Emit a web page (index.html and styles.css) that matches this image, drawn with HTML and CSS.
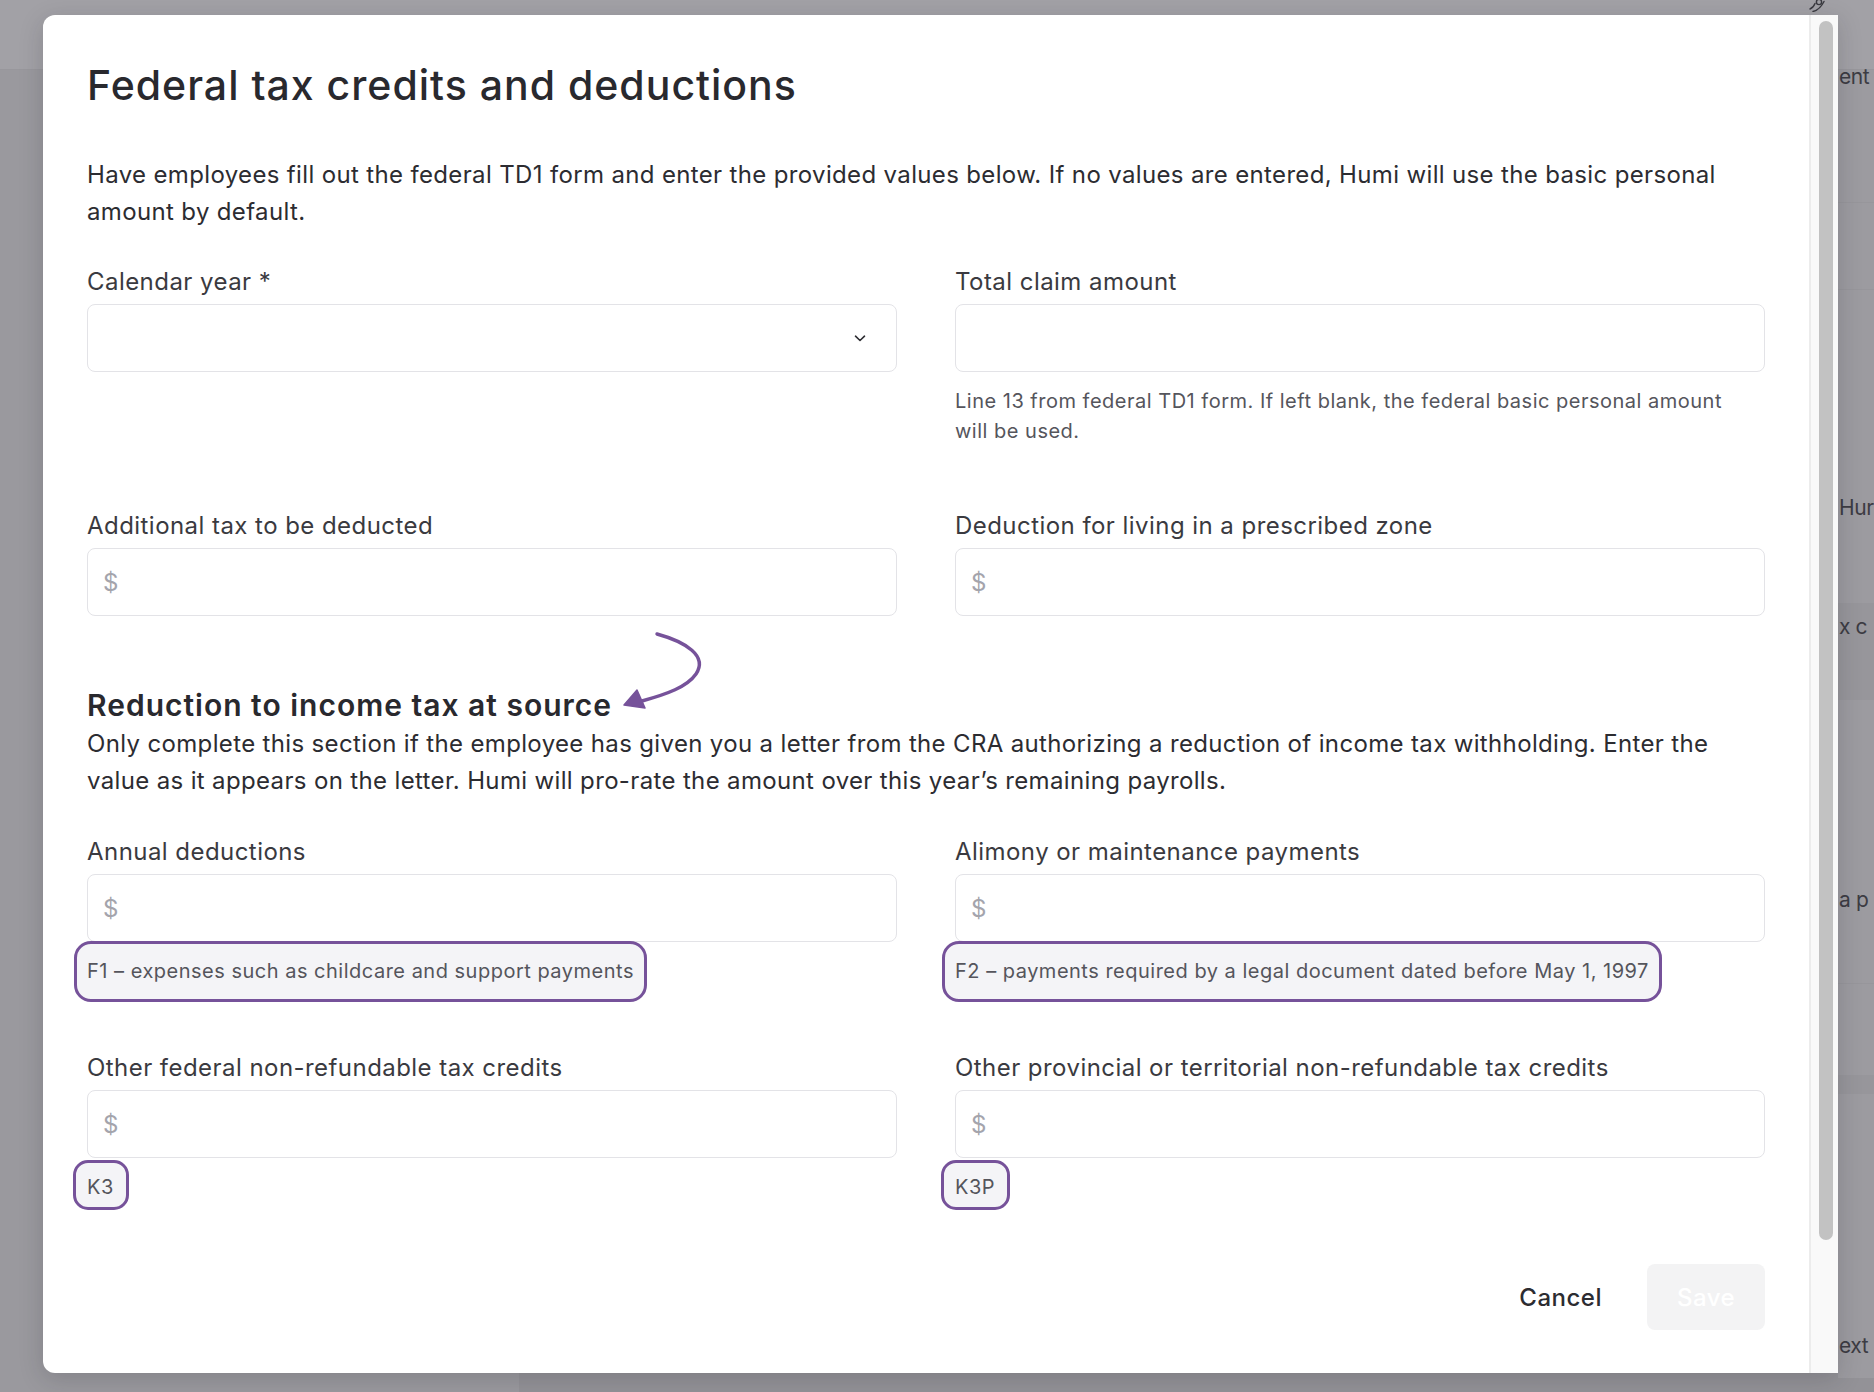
FILE: index.html
```html
<!DOCTYPE html>
<html lang="en">
<head>
    <meta charset="UTF-8">
    <meta name="viewport" content="width=device-width, initial-scale=1.0">
    <title>Federal tax credits and deductions - Humi</title>
    <link rel="stylesheet" href="styles.css">
</head>
<body>
    <div class="page">
        <div class="page-head"></div>
        <div class="page-content">
            <div class="page-nav"></div>
            <div class="page-main">
                <div class="page-card">
                    <div class="card-row row-a">ent</div>
                    <div class="card-row row-b"></div>
                    <div class="card-row row-c">Hur</div>
                    <div class="card-row row-d">x c</div>
                    <div class="card-row row-e">a p</div>
                    <div class="card-row row-f"></div>
                    <div class="card-row row-g"></div>
                    <div class="card-row row-h">ext</div>
                </div>
            </div>
        </div>
        <svg class="head-icon" width="28" height="15" viewBox="0 0 28 15" fill="none" stroke="#3a3a40" stroke-width="1.4" stroke-linecap="round">
            <circle cx="16" cy="5" r="2.6"/>
            <path d="M7 12c2.5-1 4-3 5-5.5M10 14.5c4-1 8-4 11-10"/>
        </svg>
    </div>

    <div class="modal">
        <div class="modal-body">
            <h1 class="modal-title">Federal tax credits and deductions</h1>
            <p class="intro">Have employees fill out the federal TD1 form and enter the provided values below. If no values are entered, Humi will use the basic personal amount by default.</p>

            <div class="fields">
                <div class="field">
                    <label>Calendar year *</label>
                    <div class="input select">
                        <svg class="chevron" width="12" height="7" viewBox="0 0 12 7" fill="none" stroke="#2e2e33" stroke-width="1.6" stroke-linecap="round" stroke-linejoin="round">
                            <path d="M1.5 1.2l4.5 4.3 4.5-4.3"/>
                        </svg>
                    </div>
                </div>
                <div class="field">
                    <label>Total claim amount</label>
                    <input class="input" type="text">
                    <p class="hint">Line 13 from federal TD1 form. If left blank, the federal basic personal amount will be used.</p>
                </div>
                <div class="field">
                    <label>Additional tax to be deducted</label>
                    <input class="input" type="text" placeholder="$">
                </div>
                <div class="field">
                    <label>Deduction for living in a prescribed zone</label>
                    <input class="input" type="text" placeholder="$">
                </div>
            </div>

            <h2 class="section-title">
                <span>Reduction to income tax at source
                    <svg class="pointer" width="100" height="95" viewBox="0 0 100 95" fill="none">
                        <path d="M45 11C74 19 96 33 84 51C75 64 55 71 30 78" stroke="#76529a" stroke-width="3.4" stroke-linecap="round"/>
                        <path d="M12 82L25 67L33 85Z" fill="#76529a" stroke="#76529a" stroke-width="1.5" stroke-linejoin="round"/>
                    </svg>
                </span>
            </h2>
            <p class="section-text">Only complete this section if the employee has given you a letter from the CRA authorizing a reduction of income tax withholding. Enter the value as it appears on the letter. Humi will pro-rate the amount over this year’s remaining payrolls.</p>

            <div class="fields">
                <div class="field">
                    <label>Annual deductions</label>
                    <input class="input" type="text" placeholder="$">
                    <p class="hint"><span class="marked">F1 – expenses such as childcare and support payments</span></p>
                </div>
                <div class="field">
                    <label>Alimony or maintenance payments</label>
                    <input class="input" type="text" placeholder="$">
                    <p class="hint"><span class="marked">F2 – payments required by a legal document dated before May 1, 1997</span></p>
                </div>
                <div class="field">
                    <label>Other federal non-refundable tax credits</label>
                    <input class="input" type="text" placeholder="$">
                    <p class="hint"><span class="marked short">K3</span></p>
                </div>
                <div class="field">
                    <label>Other provincial or territorial non-refundable tax credits</label>
                    <input class="input" type="text" placeholder="$">
                    <p class="hint"><span class="marked short">K3P</span></p>
                </div>
            </div>

            <div class="modal-actions">
                <button class="btn-cancel">Cancel</button>
                <button class="btn-save" disabled>Save</button>
            </div>
        </div>
        <div class="scrollbar">
            <div class="scrollbar-thumb"></div>
        </div>
    </div>
</body>
</html>
```

FILE: styles.css
```css
* {
    box-sizing: border-box;
}

body {
    margin: 0;
    width: 1874px;
    height: 1392px;
    overflow: hidden;
    position: relative;
    font-family: Inter, 'Noto Sans', sans-serif;
    color: #2c2c31;
    background-color: #9b9aa0;
}

/* page behind the dialog, already dimmed */
.page {
    height: 100%;
    display: flex;
    flex-direction: column;
}

.page-head {
    height: 70px;
    background-color: #a2a1a6;
    border-bottom: 1px solid #98979c;
}

.page-content {
    flex: 1;
    display: flex;
}

.page-nav {
    width: 519px;
    background-color: #9a999e;
}

.page-main {
    flex: 1;
    display: flex;
    justify-content: flex-end;
    background-color: #939297;
    padding-bottom: 14px;
}

.page-card {
    width: 36px;
    background-color: #9c9ba0;
    display: flex;
    flex-direction: column;
}

.card-row {
    padding-left: 1px;
    font-size: 21px;
    line-height: 30px;
    letter-spacing: -0.4px;
    color: #3c3c43;
    white-space: nowrap;
    border-bottom: 1px solid #97969b;
}

.row-a { height: 139px; margin-top: -6px; line-height: 26px; }
.row-b { height: 87px; }
.row-c { height: 314px; padding-top: 203px; }
.row-d { height: 96px; padding-top: 8px; background-color: #97969b; }
.row-e { height: 284px; padding-top: 185px; }
.row-f { height: 92px; }
.row-g { height: 18px; background-color: #97969b; }

.row-h {
    flex: 1;
    display: flex;
    align-items: flex-end;
    padding-bottom: 17px;
    border-bottom: none;
}

.head-icon {
    position: absolute;
    left: 1803px;
    top: -3px;
}

/* dialog */
.modal {
    position: absolute;
    left: 43px;
    top: 15px;
    width: 1795px;
    height: 1358px;
    display: flex;
    background-color: #fff;
    border-radius: 12px 0 0 12px;
    box-shadow: 0 6px 24px rgba(30, 30, 40, 0.18);
}

.modal-body {
    flex: 1;
    padding: 46px 44px 44px;
    display: flex;
    flex-direction: column;
}

.modal-title {
    margin: 0;
    font-size: 41px;
    line-height: 48px;
    font-weight: 500;
    color: #29292e;
    letter-spacing: 1px;
}

.intro,
.section-text {
    margin: 47px 0 0;
    font-size: 24px;
    line-height: 37px;
    letter-spacing: 0.35px;
    color: #2c2c31;
}

.fields {
    margin-top: 34px;
    display: grid;
    grid-template-columns: 1fr 1fr;
    column-gap: 58px;
    row-gap: 62px;
    align-items: start;
}

.field label {
    display: block;
    font-size: 24px;
    line-height: 36px;
    letter-spacing: 0.45px;
    color: #3a3a40;
    margin-bottom: 4px;
}

.input {
    display: block;
    width: 100%;
    height: 68px;
    padding: 0 15px;
    border: 1px solid #e3e3e7;
    border-radius: 8px;
    background-color: #fff;
    font-family: inherit;
    font-size: 24px;
    color: #2c2c31;
    outline: none;
}

.input::placeholder {
    color: #a4a4ac;
}

.select {
    display: flex;
    align-items: center;
    justify-content: flex-end;
    padding-right: 30px;
}

.hint {
    margin: 14px 0 0;
    padding-right: 20px;
    font-size: 20px;
    line-height: 30px;
    letter-spacing: 0.5px;
    color: #55555c;
}

/* purple call-outs around the form codes */
.marked {
    position: relative;
    z-index: 0;
}

.marked::before {
    content: '';
    position: absolute;
    z-index: -1;
    inset: -18px -13px -19px -13px;
    background-color: #f4f4f7;
    border: 3px solid #76529a;
    border-radius: 17px;
}

.marked.short::before {
    inset: -15px -15px -11px -14px;
    border-radius: 15px;
}

.section-title {
    margin: 70px 0 0;
    font-size: 30px;
    line-height: 39px;
    font-weight: 600;
    letter-spacing: 1px;
    color: #29292e;
}

.section-title span {
    position: relative;
}

.pointer {
    position: absolute;
    left: 100%;
    top: -64px;
}

.section-text {
    margin-top: 0;
}

.section-text + .fields {
    margin-top: 35px;
    row-gap: 64px;
}

.modal-actions {
    margin-top: 62px;
    display: flex;
    justify-content: flex-end;
    gap: 23px;
}

.modal-actions button {
    height: 66px;
    border: none;
    border-radius: 8px;
    font-family: inherit;
    font-size: 24px;
    font-weight: 500;
    letter-spacing: 0.5px;
}

.btn-cancel {
    padding: 0 22px;
    background: none;
    color: #2c2c31;
    cursor: pointer;
}

.btn-save {
    width: 118px;
    background-color: #f3f3f4;
    color: #fff;
}

.scrollbar {
    width: 29px;
    padding: 6px 5px 0 8px;
    background-color: #f9f9f9;
    border-left: 2px solid #ececec;
}

.scrollbar-thumb {
    height: 1219px;
    border-radius: 8px;
    background-color: #c2c2c2;
}
```
